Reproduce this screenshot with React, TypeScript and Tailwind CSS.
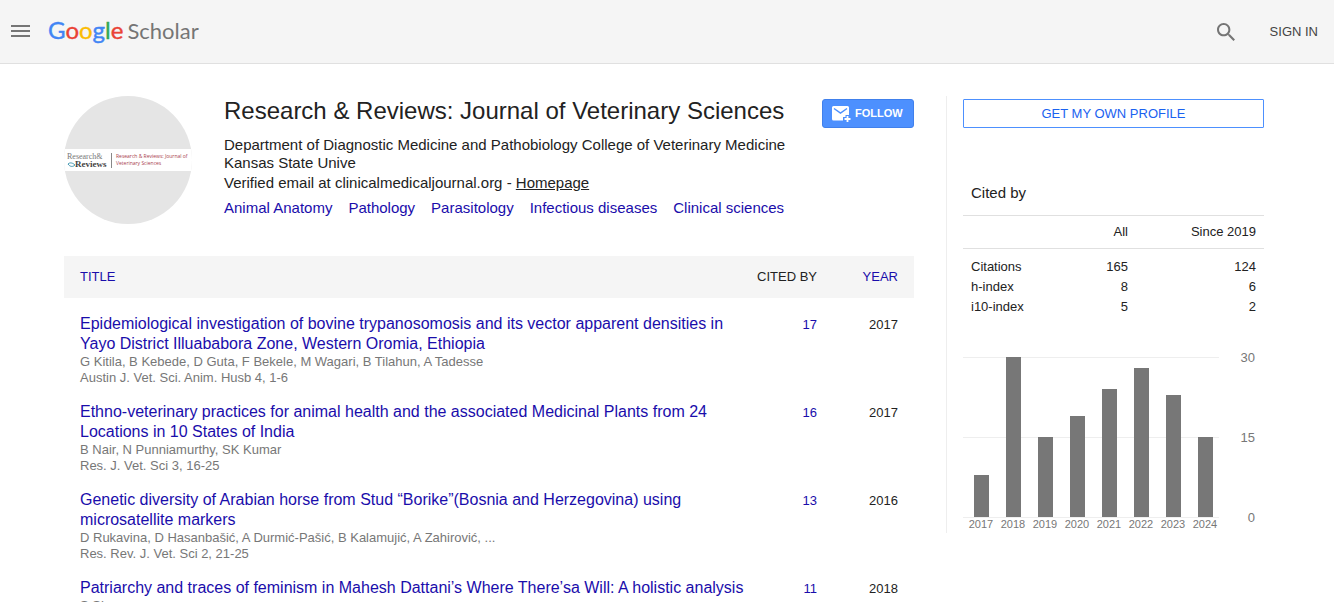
import type { ReactNode } from "react";

interface Article {
  title: string;
  authors: string;
  venue: string;
  citedBy: number;
  year: number;
}

const articles: Article[] = [
  {
    title: "Epidemiological investigation of bovine trypanosomosis and its vector apparent densities in Yayo District Illuababora Zone, Western Oromia, Ethiopia",
    authors: "G Kitila, B Kebede, D Guta, F Bekele, M Wagari, B Tilahun, A Tadesse",
    venue: "Austin J. Vet. Sci. Anim. Husb 4, 1-6",
    citedBy: 17,
    year: 2017,
  },
  {
    title: "Ethno-veterinary practices for animal health and the associated Medicinal Plants from 24 Locations in 10 States of India",
    authors: "B Nair, N Punniamurthy, SK Kumar",
    venue: "Res. J. Vet. Sci 3, 16-25",
    citedBy: 16,
    year: 2017,
  },
  {
    title: "Genetic diversity of Arabian horse from Stud “Borike”(Bosnia and Herzegovina) using microsatellite markers",
    authors: "D Rukavina, D Hasanbašić, A Durmić-Pašić, B Kalamujić, A Zahirović, ...",
    venue: "Res. Rev. J. Vet. Sci 2, 21-25",
    citedBy: 13,
    year: 2016,
  },
  {
    title: "Patriarchy and traces of feminism in Mahesh Dattani’s Where There’sa Will: A holistic analysis",
    authors: "S Sharma",
    venue: "",
    citedBy: 11,
    year: 2018,
  },
];

const interests = ["Animal Anatomy", "Pathology", "Parasitology", "Infectious diseases", "Clinical sciences"];

const stats = [
  { label: "Citations", all: 165, since: 124 },
  { label: "h-index", all: 8, since: 6 },
  { label: "i10-index", all: 5, since: 2 },
];

const perYear = [
  { year: 2017, count: 8 },
  { year: 2018, count: 30 },
  { year: 2019, count: 15 },
  { year: 2020, count: 19 },
  { year: 2021, count: 24 },
  { year: 2022, count: 28 },
  { year: 2023, count: 23 },
  { year: 2024, count: 15 },
];

function Link({ children, className = "text-[#1a0dab]" }: { children: ReactNode; className?: string }) {
  return <a href="#" className={className}>{children}</a>;
}

function Logo() {
  return (
    <a href="#" aria-label="Google Scholar" className="flex items-baseline gap-1 pb-0.5 font-['Lato',sans-serif]">
      <span className="text-2xl leading-8 [-webkit-text-stroke:0.4px]">
        <span className="text-[#4285f4]">G</span>
        <span className="text-[#ea4335]">o</span>
        <span className="text-[#fbbc05]">o</span>
        <span className="text-[#4285f4]">g</span>
        <span className="text-[#34a853]">l</span>
        <span className="text-[#ea4335]">e</span>
      </span>
      <span className="text-[22px] leading-8 text-[#757575]">Scholar</span>
    </a>
  );
}

function Header() {
  return (
    <header className="flex h-16 items-center border-b border-[#e0e0e0] bg-[#f5f5f5] pr-4 pl-[11px]">
      <button aria-label="Menu" className="mr-[18px]">
        <svg width="19" height="13" viewBox="0 0 19 13" fill="#757575">
          <path d="M0 0h19v2H0zM0 5h19v2H0zM0 10h19v2H0z" />
        </svg>
      </button>
      <Logo />
      <button aria-label="Search" className="mr-[35px] ml-auto">
        <svg width="18" height="18" viewBox="3 3 17.5 17.5" fill="#757575">
          <path d="M15.5 14h-.79l-.28-.27C15.41 12.59 16 11.11 16 9.5 16 5.91 13.09 3 9.5 3S3 5.91 3 9.5 5.91 16 9.5 16c1.61 0 3.09-.59 4.23-1.57l.27.28v.79l5 4.99L20.49 19l-4.99-5zm-6 0C7.01 14 5 11.99 5 9.5S7.01 5 9.5 5 14 7.01 14 9.5 11.99 14 9.5 14z" />
        </svg>
      </button>
      <Link className="text-[13px] text-[#444]">SIGN IN</Link>
    </header>
  );
}

function Avatar() {
  return (
    <svg width="128" height="128" viewBox="0 0 128 128" className="shrink-0 rounded-full" role="img" aria-label="Research & Reviews">
      <rect width="128" height="128" fill="#e5e5e5" />
      <rect y="53" width="128" height="22" fill="#fff" />
      <text x="3" y="63" fontSize="8" fill="#777" fontFamily="Liberation Serif, serif">Research&amp;</text>
      <path d="M4 68c2-2 5-1 7 1-2 2-5 2-7-1z" fill="none" stroke="#3d93ad" strokeWidth="1" />
      <text x="11" y="71" fontSize="9" fontWeight="700" fill="#444" fontFamily="Liberation Serif, serif">Reviews</text>
      <path d="M47.5 57v15" stroke="#888" strokeWidth="1" />
      <text x="52" y="62" fontSize="5" fill="#a8404c" fontFamily="Open Sans, sans-serif">Research &amp; Reviews: Journal of</text>
      <text x="52" y="69" fontSize="5" fill="#a8404c" fontFamily="Open Sans, sans-serif">Veterinary Sciences</text>
    </svg>
  );
}

function Profile() {
  return (
    <section className="flex">
      <Avatar />
      <div className="ml-8 flex-1 text-[15px] leading-[18px]">
        <h1 className="mb-2.5 text-2xl leading-[30px]">Research &amp; Reviews: Journal of Veterinary Sciences</h1>
        <p>Department of Diagnostic Medicine and Pathobiology College of Veterinary Medicine Kansas State Unive</p>
        <p className="mt-0.5">
          Verified email at clinicalmedicaljournal.org - <Link className="underline">Homepage</Link>
        </p>
        <div className="mt-[7px] flex flex-wrap gap-x-4">
          {interests.map((name) => <Link key={name}>{name}</Link>)}
        </div>
      </div>
      <button className="mt-[3px] ml-4 flex h-[29px] w-[92px] shrink-0 items-center gap-1 rounded-[3px] border border-[#4080ec] bg-[#4d90fe] pl-[9px] text-[11px] font-bold text-white">
        <svg width="19" height="16" viewBox="0 0 19 16">
          <path d="M1.5 0h14A1.5 1.5 0 0 1 17 1.500V9h-3.500v2H11v3.500H1.500A1.500 1.500 0 0 1 0 13V1.500A1.500 1.500 0 0 1 1.500 0z" fill="#fff" />
          <path d="M2 2.5l6.500 4.500L15 2.500" fill="none" stroke="#4d90fe" strokeWidth="1.500" />
          <path d="M15.500 10v6M12.500 13h6" stroke="#fff" strokeWidth="1.800" />
        </svg>
        FOLLOW
      </button>
    </section>
  );
}

function Articles() {
  return (
    <table className="mt-8 w-full table-fixed text-[13px] leading-4">
      <thead>
        <tr className="h-[42px] bg-[#f5f5f5]">
          <th className="pl-4 text-left font-normal"><Link>TITLE</Link></th>
          <th className="w-20 pr-4 text-right font-normal whitespace-nowrap">CITED BY</th>
          <th className="w-[81px] pr-4 text-right font-normal"><Link>YEAR</Link></th>
        </tr>
      </thead>
      <tbody>
        {articles.map((a) => (
          <tr key={a.title} className="align-top">
            <td className="pt-4 pl-4 text-[#777]">
              <Link className="block text-base leading-5 text-[#1a0dab]">{a.title}</Link>
              <div>{a.authors}</div>
              <div>{a.venue}</div>
            </td>
            <td className="pt-[19px] pr-4 text-right"><Link>{a.citedBy}</Link></td>
            <td className="pt-[19px] pr-4 text-right">{a.year}</td>
          </tr>
        ))}
      </tbody>
    </table>
  );
}

function CitationsChart() {
  return (
    <svg width="301" height="182" viewBox="0 0 301 182" className="mt-[34px]" role="img" aria-label="Citations per year" fill="#777">
      {[30, 15, 0].map((v, i) => (
        <g key={v}>
          <rect x="0" y={6 + i * 80} width="256" height="1" fill="#eee" />
          <text x="292" y={11 + i * 80} fontSize="13" textAnchor="end">{v}</text>
        </g>
      ))}
      {perYear.map(({ year, count }, i) => {
        const h = Math.floor((count * 160) / 30);
        return (
          <g key={year}>
            <rect x={11 + i * 32} y={166 - h} width="15" height={h} />
            <text x={18 + i * 32} y="177" fontSize="11" textAnchor="middle">{year}</text>
          </g>
        );
      })}
    </svg>
  );
}

function Sidebar() {
  return (
    <aside className="w-[318px] shrink-0 self-start border-l border-[#eee] pt-[3px] pl-4">
      <button className="h-[29px] w-full rounded-[1px] border border-[#4d90fe] text-[13px] text-[#1a62f0]">GET MY OWN PROFILE</button>
      <h2 className="mt-14 pl-2 text-[15px] leading-[18px]">Cited by</h2>
      <table className="mt-[13px] w-full text-[13px] leading-5">
        <thead>
          <tr className="h-[33px] border-y border-[#e0e0e0]">
            <th />
            <th className="pr-2 text-right font-normal">All</th>
            <th className="w-32 pr-2 text-right font-normal">Since 2019</th>
          </tr>
        </thead>
        <tbody>
          <tr className="h-2" />
          {stats.map((s) => (
            <tr key={s.label}>
              <td className="pl-2">{s.label}</td>
              <td className="pr-2 text-right">{s.all}</td>
              <td className="pr-2 text-right">{s.since}</td>
            </tr>
          ))}
        </tbody>
      </table>
      <CitationsChart />
    </aside>
  );
}

export default function App() {
  return (
    <div className="font-['Liberation_Sans',Arial,sans-serif] text-[#222]">
      <Header />
      <main className="flex gap-8 pt-8 pr-[70px] pl-16">
        <div className="min-w-0 flex-1">
          <Profile />
          <Articles />
        </div>
        <Sidebar />
      </main>
    </div>
  );
}
